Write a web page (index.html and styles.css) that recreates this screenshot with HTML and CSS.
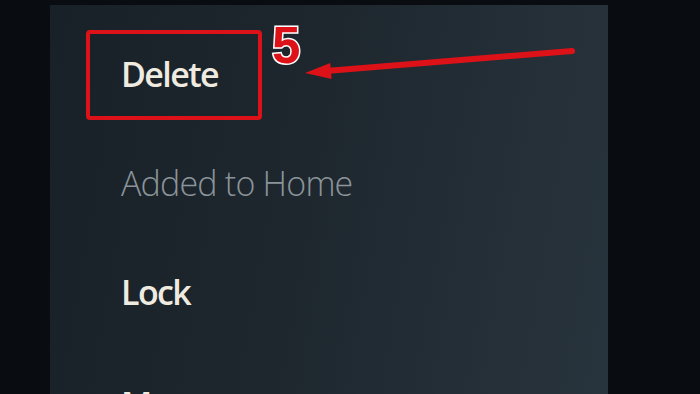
FILE: index.html
```html
<!DOCTYPE html>
<html lang="en">
<head>
  <meta charset="UTF-8">
  <meta name="viewport" content="width=device-width, initial-scale=1.0">
  <title>App options</title>
  <link rel="stylesheet" href="styles.css">
</head>
<body>
  <div class="screen">
    <div class="panel">
      <ul class="menu">
        <li class="menu-item">Delete</li>
        <li class="menu-item muted">Added to Home</li>
        <li class="menu-item">Lock</li>
        <li class="menu-item last">Move</li>
      </ul>
    </div>
  </div>

  <!-- step annotation drawn over the screen -->
  <svg class="annotation" width="700" height="394" viewBox="0 0 700 394">
    <rect class="mark" x="88" y="32" width="172" height="86" rx="2"></rect>
    <text class="step" x="272" y="63">5</text>
    <line class="mark" x1="572" y1="51" x2="326" y2="71"></line>
    <polygon class="head" points="305,73 330.3,62.9 331.6,78.9"></polygon>
  </svg>
</body>
</html>
```

FILE: styles.css
```css
html, body {
  margin: 0;
  height: 100%;
  overflow: hidden;
}
body {
  background-color: #090c10;
  font-family: "Open Sans", sans-serif;
}
.screen {
  display: flex;
  height: 394px;
  padding: 5px 0 0 50px;
  box-sizing: border-box;
}
.panel {
  width: 558px;
  height: 100%;
  padding: 15px 0 0 71px;
  box-sizing: border-box;
  background: linear-gradient(100deg, #192128 0%, #1e272e 45%, #28343d 100%);
}
.menu {
  list-style: none;
  margin: 0;
  padding: 0;
}
.menu-item {
  height: 109px;
  line-height: 109px;
  font-size: 34px;
  font-weight: 600;
  letter-spacing: -1.6px;
  color: #efebe0;
  white-space: nowrap;
}
.menu-item.muted {
  font-size: 34px;
  font-weight: 300;
  letter-spacing: -0.8px;
  color: #8b949a;
}
.menu-item.last {
  padding-top: 3px;
}
.annotation {
  position: absolute;
  left: 0;
  top: 0;
}
.mark {
  fill: none;
  stroke: #dc1218;
  stroke-width: 4;
  stroke-linecap: round;
}
line.mark {
  stroke-width: 6;
}
.head {
  fill: #dc1218;
}
.step {
  font-family: "Liberation Sans", sans-serif;
  font-size: 51px;
  font-weight: 700;
  fill: #dc1218;
  stroke: #ffffff;
  stroke-width: 3;
  paint-order: stroke;
}
```
